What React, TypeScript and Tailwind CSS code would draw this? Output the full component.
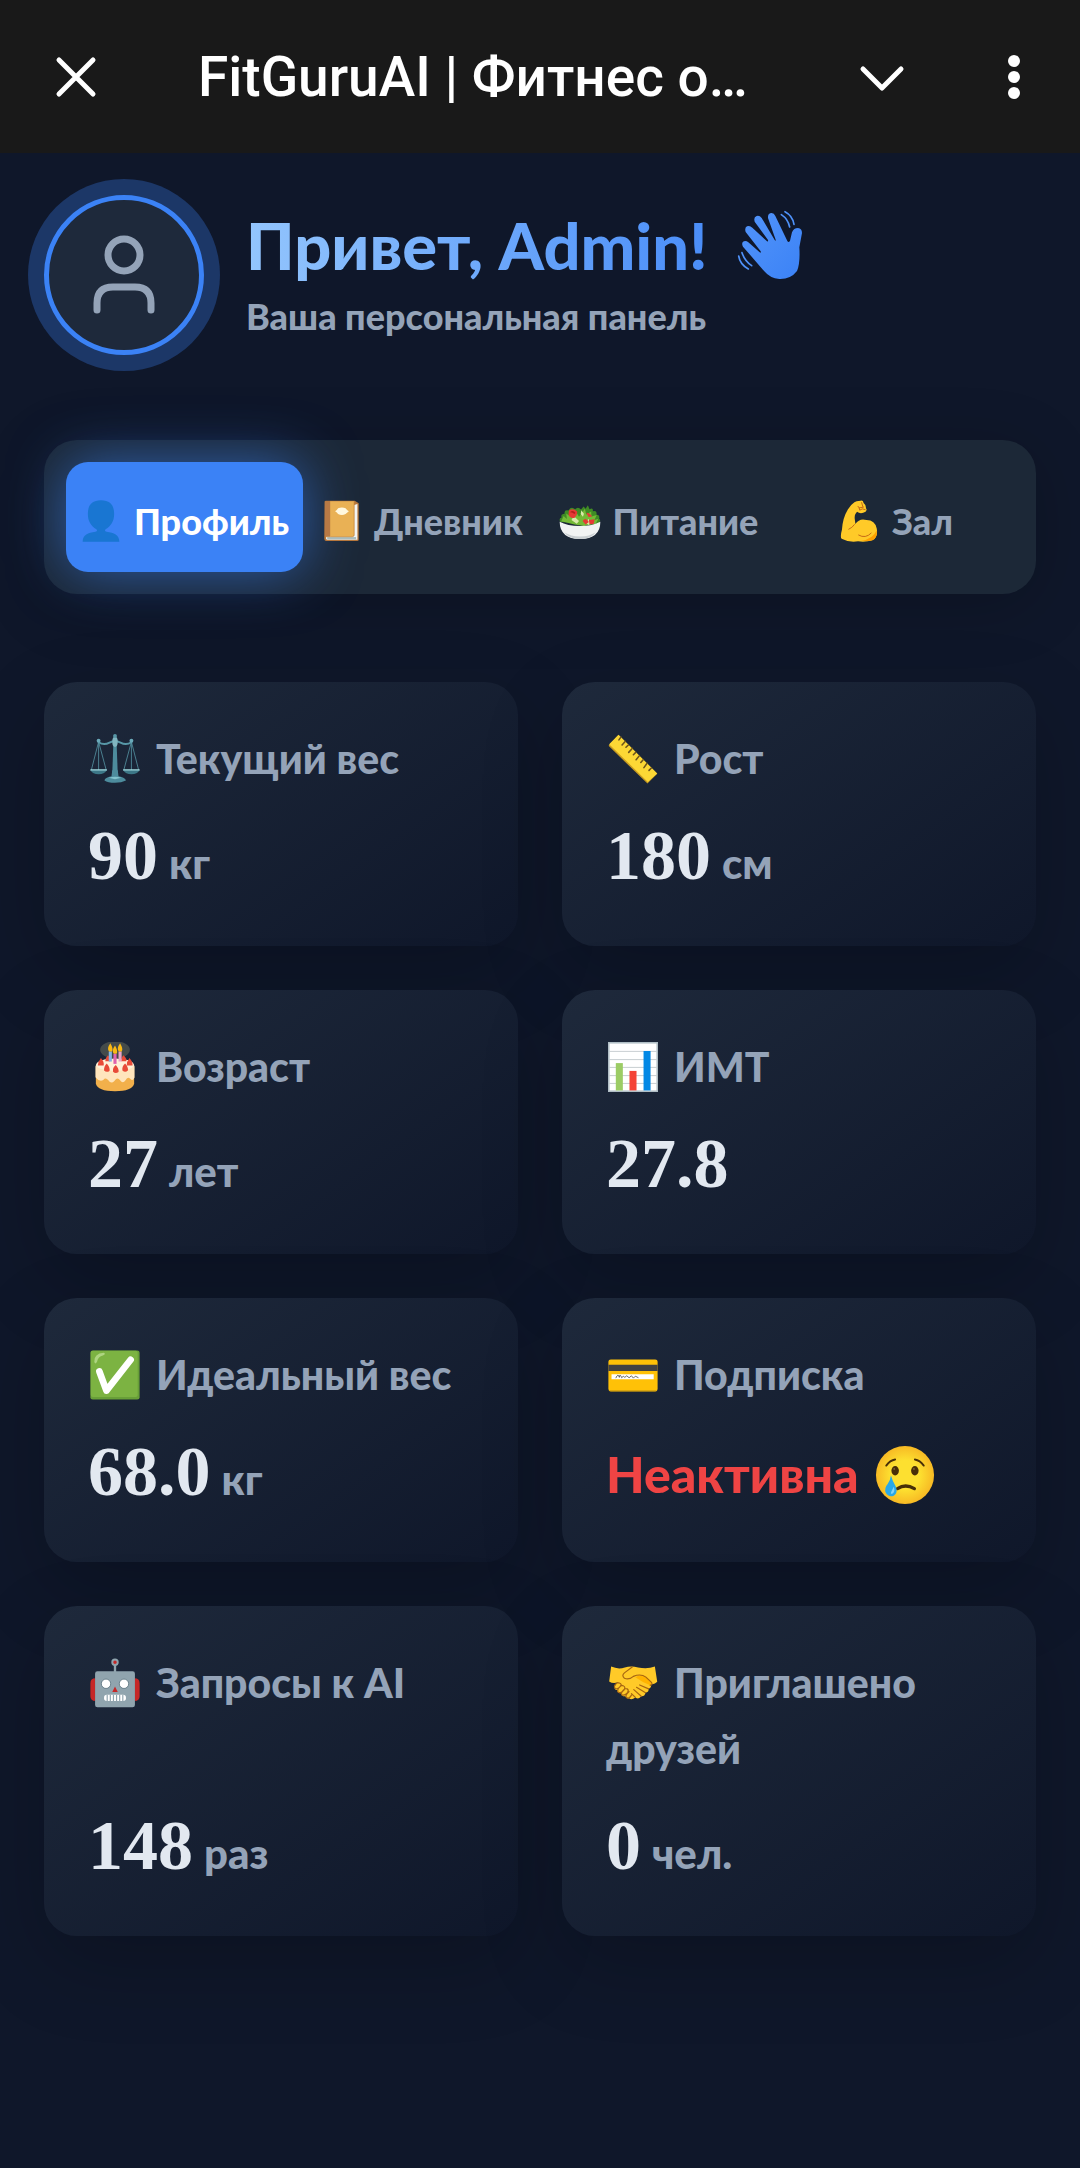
import React from 'react';

type IconProps = { className?: string };

const WaveIcon: React.FC<IconProps> = ({ className }) => (
  <svg viewBox="110 60 204 216" className={className} aria-hidden="true">
    <defs>
      <linearGradient id="wave" x1="0" y1="0" x2="1" y2="1">
        <stop offset="0" stopColor="#5294fa" />
        <stop offset="1" stopColor="#3b82f6" />
      </linearGradient>
    </defs>
    <path
      fill="url(#wave)"
      d="M147 160L181 190Q186 193 184 187L139 129Q135 117 143 112Q151 108 159 116L203 157Q207 159 206 153L166 98Q162 84 172 81Q180 78 187 87L226 153Q230 158 229 152L206 87Q205 74 215 72Q224 71 228 81L264 156Q268 163 272 155L278 130Q283 117 296 117Q308 119 308 132L300 175Q303 222 293 246Q274 271 240 270Q212 268 195 247L131 173Q126 164 131 158Q139 153 147 160Z"
    />
    <g fill="none" stroke="#4f92fa" strokeWidth="5" strokeLinecap="round">
      <path d="M257 68Q280 80 284 106M246 77Q266 90 271 114" />
      <path d="M118 201Q122 226 147 240M128 191Q136 216 157 230" />
    </g>
  </svg>
);

const PersonIcon: React.FC<IconProps> = ({ className }) => (
  <svg viewBox="0 0 128 128" className={className} aria-hidden="true">
    <path
      fill="#1976d2"
      d="M64 1C36 1 24 16 24 42c0 23 9 37 26 47q5 6-3 8C24 101 9 105 8 127h112c-1-22-16-26-39-30q-8-2-3-8c17-10 26-24 26-47C104 16 92 1 64 1Z"
    />
  </svg>
);

const BookIcon: React.FC<IconProps> = ({ className }) => (
  <svg viewBox="0 0 128 128" className={className} aria-hidden="true">
    <path fill="#b5763c" d="M14 5Q14 2 18 2H106L118 10V121Q118 125 113 125H18Q13 124 13 118Z" />
    <path fill="#f2f5f6" d="M20 110H104V15L114 12V121H21Q16 117 20 110Z" />
    <path fill="#a9bcbd" d="M22 113H110V120H22Z" />
    <path fill="#b87945" d="M15 4H31V112H15Z" />
    <path fill="#e9b155" d="M31 4H104V107Q104 111 99 112H31Z" />
    <path fill="#fff8df" d="M46 34Q52 31 55 25Q67 20 78 25Q82 31 88 34Q82 38 78 43Q67 49 55 43Q52 37 46 34Z" />
    <path fill="none" stroke="#c48234" strokeWidth="2" d="M104 5V107Q104 112 98 112H15" />
  </svg>
);

const SaladIcon: React.FC<IconProps> = ({ className }) => (
  <svg viewBox="0 0 128 128" className={className} aria-hidden="true">
    <path
      fill="#3f8b24"
      d="M4 67Q-2 56 8 53Q4 43 17 42Q15 29 29 32Q37 17 49 28Q58 18 67 29L75 20L81 27L88 16L93 28Q105 21 103 34Q117 31 114 44Q126 46 122 56Q130 63 120 72Z"
    />
    <path
      fill="#73b936"
      d="M7 65L14 49L24 58L22 41L37 52L51 34L61 51L79 27L83 44L98 35L99 50L115 46L108 61L120 57L112 72L76 79L47 75Z"
    />
    <path fill="#d9e9a9" d="M45 49L61 64L54 72L38 61ZM89 58L98 66L91 76L82 70ZM68 31L76 42L73 51L66 43Z" />
    <path fill="#e53935" d="M30 32Q43 23 55 35Q57 47 48 54Q35 58 29 45ZM72 64Q81 51 91 67L81 75ZM83 39Q95 40 101 50L90 52ZM91 61L109 59L105 74L93 73Z" />
    <path fill="#b71c1c" d="M33 38Q42 29 50 39L47 43Q39 36 33 38Z" />
    <path fill="#f1f3f3" d="M2 66Q25 79 64 79Q103 79 126 66Q126 118 64 119Q3 118 2 66Z" />
    <path fill="#c9cfd2" d="M16 98Q35 111 64 111Q94 111 112 98Q98 119 64 119Q31 119 16 98Z" />
  </svg>
);

const MuscleIcon: React.FC<IconProps> = ({ className }) => (
  <svg viewBox="0 0 128 128" className={className} aria-hidden="true">
    <path
      fill="#ffca28"
      d="M50 7Q57 3 63 3L69 2Q77 1 78 9Q86 15 85 25Q90 29 84 36Q69 44 58 36L53 43Q50 49 51 57L53 73Q66 54 87 61Q113 61 118 87Q123 112 105 123Q84 129 61 126Q33 130 11 118Q6 112 12 91Q14 55 30 29Q38 15 50 7Z"
    />
    <path fill="#ffa000" d="M118 92Q121 124 91 125L70 124Q106 120 118 92Z" />
    <path
      fill="none"
      stroke="#c56a16"
      strokeWidth="3"
      strokeLinecap="round"
      d="M50 75Q43 85 33 89M63 107Q84 119 101 101M61 19Q67 24 66 31Q73 24 83 29M72 8L76 21M64 24L77 22"
    />
  </svg>
);

const ScalesIcon: React.FC<IconProps> = ({ className }) => (
  <svg viewBox="0 0 128 128" className={className} aria-hidden="true">
    <g fill="none" stroke="#5797a7" strokeWidth="2">
      <path d="M22 20L3 94M22 20V94M22 20L42 94M106 20L86 94M106 20V94M106 20L125 94" />
    </g>
    <path fill="none" stroke="#5797a7" strokeWidth="5" strokeLinecap="round" d="M22 21Q35 30 50 22Q64 15 78 22Q93 30 106 21" />
    <path fill="#4d8c9d" d="M60 20H68L71 101H57Z" />
    <ellipse cx="64" cy="20" rx="7" ry="13" fill="#80b5c0" />
    <circle cx="64" cy="5" r="5" fill="#5797a7" />
    <circle cx="22" cy="17" r="5" fill="#6aa9b9" />
    <circle cx="106" cy="17" r="5" fill="#6aa9b9" />
    <path fill="#3c7787" d="M1 92H43Q37 103 22 103Q7 103 1 92ZM85 92H127Q121 103 106 103Q91 103 85 92Z" />
    <path stroke="#a3dce1" strokeWidth="3" d="M1 92H43M85 92H127" />
    <path fill="#4d8c9d" d="M57 93H71L73 108Q91 112 92 119Q81 125 64 125Q45 125 37 119Q38 111 55 108Z" />
    <path fill="#83c3ce" d="M48 112Q64 107 80 112L64 116Z" />
  </svg>
);

const RulerIcon: React.FC<IconProps> = ({ className }) => (
  <svg viewBox="0 0 128 128" className={className} aria-hidden="true">
    <path fill="#c99c20" d="M2 29L26 3L126 102L101 127L2 31Z" />
    <path fill="#fdd835" d="M3 26L27 2L126 101L102 123Z" />
    <path
      stroke="#70551b"
      strokeWidth="4"
      strokeLinecap="round"
      d="M33 8L28 15M44 19L36 28M52 28L46 34M62 37L53 47M71 47L65 53M80 56L72 66M90 66L84 73M100 75L92 86M111 87L105 93"
    />
  </svg>
);

const CakeIcon: React.FC<IconProps> = ({ className }) => (
  <svg viewBox="0 0 128 128" className={className} aria-hidden="true">
    <ellipse cx="64" cy="20" rx="38" ry="22" fill="#fff4a0" opacity=".18" />
    <path fill="#f2b04b" d="M15 64V107Q20 126 64 126Q108 126 113 107V64Z" />
    <path
      fill="#ffe5bd"
      d="M14 62Q20 43 64 43Q108 43 114 62V91Q110 102 103 94Q96 87 91 98Q84 108 77 98Q70 88 63 99Q54 109 47 98Q40 89 34 97Q24 103 14 90Z"
    />
    <ellipse cx="64" cy="58" rx="48" ry="16" fill="#fff1d8" />
    <g fill="#e84b38">
      <path d="M46 34Q54 43 52 49H39Q38 42 46 34ZM86 34Q95 43 93 49H80Q78 42 86 34ZM28 41Q37 51 35 60H20Q20 51 28 41ZM101 41Q110 51 109 60H94Q93 51 101 41ZM43 55Q52 66 50 74Q42 79 36 73Q35 63 43 55ZM66 59Q75 69 73 77Q65 82 59 76Q57 66 66 59ZM90 55Q99 66 97 73Q90 79 83 73Q81 63 90 55Z" />
    </g>
    <path fill="#85b5e5" d="M48 24H56V50H48Z" />
    <path fill="#df62ae" d="M60 30H68V56H60Z" />
    <path fill="#eaa4c7" d="M73 24H81V50H73Z" />
    <path fill="#f9b916" d="M52 3Q61 18 56 24H49Q42 17 52 3ZM64 9Q73 24 68 30H61Q54 23 64 9ZM77 3Q86 18 81 24H74Q67 17 77 3Z" />
  </svg>
);

const ChartIcon: React.FC<IconProps> = ({ className }) => (
  <svg viewBox="0 0 128 128" className={className} aria-hidden="true">
    <rect x="2" y="2" width="124" height="124" fill="#fff" stroke="#b0bec5" strokeWidth="4" />
    <path stroke="#b8c0c4" strokeWidth="2" d="M4 24H124M4 45H124M4 65H124M4 86H124M4 106H124" />
    <rect x="20" y="54" width="18" height="70" fill="#9ccc65" />
    <rect x="55" y="74" width="18" height="50" fill="#f44336" />
    <rect x="91" y="23" width="18" height="101" fill="#0288e5" />
  </svg>
);

const CheckIcon: React.FC<IconProps> = ({ className }) => (
  <svg viewBox="0 0 128 128" className={className} aria-hidden="true">
    <rect x="1" y="1" width="126" height="126" rx="6" fill="#689f38" />
    <rect x="2" y="2" width="120" height="118" rx="5" fill="#7cb342" />
    <path fill="#aed581" d="M11 30Q10 9 35 7Q42 10 33 14Q21 16 18 30Q13 39 11 30Z" />
    <path fill="none" stroke="#fff" strokeWidth="17" strokeLinecap="round" strokeLinejoin="round" d="M24 55L42 104L104 25" />
  </svg>
);

const CardIcon: React.FC<IconProps> = ({ className }) => (
  <svg viewBox="0 0 128 128" className={className} aria-hidden="true">
    <rect x="1" y="24" width="126" height="82" rx="6" fill="#ffc107" />
    <path fill="#424242" d="M1 38H127V54H1Z" />
    <path fill="#fff" d="M9 62H117V75H9Z" />
    <path fill="none" stroke="#424242" strokeWidth="2" d="M20 72Q26 58 29 70Q30 58 35 71Q39 64 43 70L48 66L54 71L60 66L65 72L70 67L78 71" />
    <path stroke="#9d7b1a" strokeWidth="2" d="M4 105H124" />
  </svg>
);

const RobotIcon: React.FC<IconProps> = ({ className }) => (
  <svg viewBox="0 0 128 128" className={className} aria-hidden="true">
    <path stroke="#90a4ae" strokeWidth="6" d="M64 15V38" />
    <circle cx="64" cy="11" r="7" fill="#c62828" stroke="#90a4ae" strokeWidth="5" />
    <path fill="#c62828" d="M14 52Q1 52 1 65V98Q1 110 14 110ZM114 52Q127 52 127 65V98Q127 110 114 110Z" />
    <rect x="13" y="34" width="102" height="92" rx="6" fill="#90a4ae" />
    <g fill="#fff" stroke="#546e7a" strokeWidth="2">
      <circle cx="41" cy="66" r="12" />
      <circle cx="87" cy="66" r="12" />
    </g>
    <path fill="#c62828" d="M64 73L71 87H57Z" />
    <rect x="36" y="94" width="56" height="16" rx="7" fill="#fff" />
    <path stroke="#90a4ae" strokeWidth="3" d="M44 94V110M52 94V110M60 94V110M68 94V110M76 94V110M84 94V110" />
  </svg>
);

const HandshakeIcon: React.FC<IconProps> = ({ className }) => (
  <svg viewBox="0 0 128 128" className={className} aria-hidden="true">
    <path
      fill="#ffca28"
      d="M8 22Q27 30 43 24Q59 20 77 24Q100 29 120 22L126 61Q120 68 111 67Q111 76 104 79Q105 88 96 89Q94 99 85 98Q79 107 70 101Q60 109 54 103Q47 105 44 98Q35 99 33 90Q23 91 24 82Q14 82 18 71L24 63Q11 66 3 60Z"
    />
    <path fill="#ffb300" d="M70 49Q90 63 108 70Q113 68 111 61L96 47Q83 41 70 49Z" />
    <path
      fill="none"
      stroke="#a66512"
      strokeWidth="3"
      strokeLinecap="round"
      strokeLinejoin="round"
      d="M62 23L42 38Q34 45 42 52Q54 57 65 47Q84 39 97 49L110 61Q116 67 108 70M24 63Q13 71 18 77Q24 82 31 73Q37 67 29 64ZM35 70Q23 79 25 86Q31 93 41 82Q46 74 39 71ZM44 78Q32 88 35 94Q41 98 50 89Q54 82 49 79ZM54 86Q43 96 47 101Q54 106 60 95M81 69L104 79M73 75L96 89M66 81L85 98M60 91L70 101"
    />
  </svg>
);

const CryIcon: React.FC<IconProps> = ({ className }) => (
  <svg viewBox="0 0 128 128" className={className} aria-hidden="true">
    <defs>
      <radialGradient id="face">
        <stop offset=".5" stopColor="#fde030" />
        <stop offset="1" stopColor="#f7b924" />
      </radialGradient>
    </defs>
    <circle cx="64" cy="64" r="62" fill="url(#face)" />
    <g fill="none" stroke="#482f08" strokeLinecap="round">
      <path strokeWidth="4" d="M24 44Q32 33 43 31M85 31Q96 33 104 44" />
      <path strokeWidth="7" d="M48 93Q65 82 84 93" />
    </g>
    <ellipse cx="43" cy="55" rx="8" ry="10" fill="#482f08" />
    <ellipse cx="85" cy="55" rx="8" ry="10" fill="#482f08" />
    <circle cx="41" cy="51" r="2" fill="#80633a" />
    <circle cx="83" cy="51" r="2" fill="#80633a" />
    <path fill="#29a8e8" d="M34 65Q37 76 44 88Q50 102 40 108Q29 112 23 102Q19 92 27 83Q33 74 34 65Z" />
    <path fill="#81d4fa" d="M40 89Q44 99 37 104Q32 105 35 99Z" />
  </svg>
);

const tabs = [
  { icon: PersonIcon, title: 'Профиль' },
  { icon: BookIcon, title: 'Дневник' },
  { icon: SaladIcon, title: 'Питание' },
  { icon: MuscleIcon, title: 'Зал' },
];

const stats = [
  { icon: ScalesIcon, title: 'Текущий вес', value: '90', unit: 'кг' },
  { icon: RulerIcon, title: 'Рост', value: '180', unit: 'см' },
  { icon: CakeIcon, title: 'Возраст', value: '27', unit: 'лет' },
  { icon: ChartIcon, title: 'ИМТ', value: '27.8' },
  { icon: CheckIcon, title: 'Идеальный вес', value: '68.0', unit: 'кг' },
  { icon: CardIcon, title: 'Подписка', status: 'Неактивна' },
  { icon: RobotIcon, title: 'Запросы к AI', value: '148', unit: 'раз' },
  { icon: HandshakeIcon, title: 'Приглашено друзей', value: '0', unit: 'чел.' },
];

const App: React.FC = () => {
  const [active, setActive] = React.useState(0);

  return (
    <div className="min-h-screen bg-[#0f172a] font-['Lato','Open_Sans',sans-serif] font-black text-[#94a3b8]">
      {/* Window bar */}
      <header className="flex h-[153px] items-center bg-[#191919] pl-[54px] pr-11 font-['Roboto',sans-serif] text-white">
        <button type="button" aria-label="Закрыть">
          <svg viewBox="0 0 44 44" className="size-11" fill="none" stroke="currentColor" strokeWidth="5" strokeLinecap="round">
            <path d="M5 5L39 39M39 5L5 39" />
          </svg>
        </button>
        <h2 className="ml-[100px] flex-1 truncate text-[55px] leading-[72px] font-medium">FitGuruAI | Фитнес о…</h2>
        <button type="button" aria-label="Свернуть" className="mr-[86px]">
          <svg viewBox="0 0 48 44" className="h-11 w-12" fill="none" stroke="currentColor" strokeWidth="5" strokeLinecap="round" strokeLinejoin="round">
            <path d="M5 14L24 33L43 14" />
          </svg>
        </button>
        <button type="button" aria-label="Меню">
          <svg viewBox="0 0 44 48" className="h-12 w-11" fill="currentColor">
            <circle cx="22" cy="8" r="6" />
            <circle cx="22" cy="24" r="6" />
            <circle cx="22" cy="40" r="6" />
          </svg>
        </button>
      </header>

      <main className="px-11 pt-[42px] pb-[232px]">
        {/* Greeting */}
        <section className="mb-[85px] flex items-center gap-[42px]">
          <div className="flex size-40 shrink-0 items-center justify-center rounded-full border-[5px] border-[#3b82f6] bg-[#1e293b] shadow-[0_0_0_16px_rgba(59,130,246,0.3)]">
            <svg viewBox="0 0 64 80" className="h-20 w-16" fill="none" stroke="currentColor" strokeWidth="7" strokeLinecap="round">
              <circle cx="32" cy="20" r="16" />
              <path d="M5 75V68Q5 52 21 52H43Q59 52 59 68V75" />
            </svg>
          </div>
          <div>
            <div className="flex items-center gap-7">
              <h1 className="bg-linear-to-r from-[#93c5fd] to-[#4a8df8] bg-clip-text text-[65px] leading-[82px] text-transparent">
                Привет, Admin!
              </h1>
              <WaveIcon className="h-[72px] w-[68px]" />
            </div>
            <p className="text-[36px] leading-[60px]">Ваша персональная панель</p>
          </div>
        </section>

        {/* Tabs */}
        <nav className="mb-22 flex rounded-[33px] bg-[#1c2837] p-[22px] shadow-[0_11px_66px_rgba(0,0,0,0.2)]">
          {tabs.map((tab, index) => (
            <button
              key={tab.title}
              type="button"
              onClick={() => setActive(index)}
              className={
                index === active
                  ? 'flex h-[110px] flex-1 basis-0 items-center justify-center gap-3 rounded-[22px] bg-[#3b82f6] pt-2 text-[36px] text-white shadow-[0_0_55px_rgba(59,130,246,0.6)]'
                  : 'flex h-[110px] flex-1 basis-0 items-center justify-center gap-3 rounded-[22px] pt-2 text-[36px]'
              }
            >
              <tab.icon className="size-[42px] shrink-0" />
              {tab.title}
            </button>
          ))}
        </nav>

        {/* Stats grid */}
        <section className="grid grid-cols-2 gap-11">
          {stats.map((stat) => (
            <article
              key={stat.title}
              className="flex flex-col justify-between gap-[11px] rounded-[33px] bg-[linear-gradient(145deg,#1e293b,#0f172a)] p-11 shadow-[0_28px_83px_rgba(0,0,0,0.2)]"
            >
              <h3 className="text-[41px] leading-[66px]">
                <stat.icon className="mr-4 ml-[2px] inline-block size-[50px] align-[-10px]" />
                {stat.title}
              </h3>
              {stat.status ? (
                <p className="flex h-[99px] items-center gap-4 pt-3 text-[50px] text-[#ef4444]">
                  {stat.status}
                  <CryIcon className="size-[60px]" />
                </p>
              ) : (
                <p className="flex h-[99px] items-baseline gap-[11px] text-[42px] leading-[105px]">
                  <span className="font-['Liberation_Serif',serif] text-[70px] text-[#e2e8f0]">{stat.value}</span>
                  {stat.unit}
                </p>
              )}
            </article>
          ))}
        </section>
      </main>
    </div>
  );
};

export default App;
